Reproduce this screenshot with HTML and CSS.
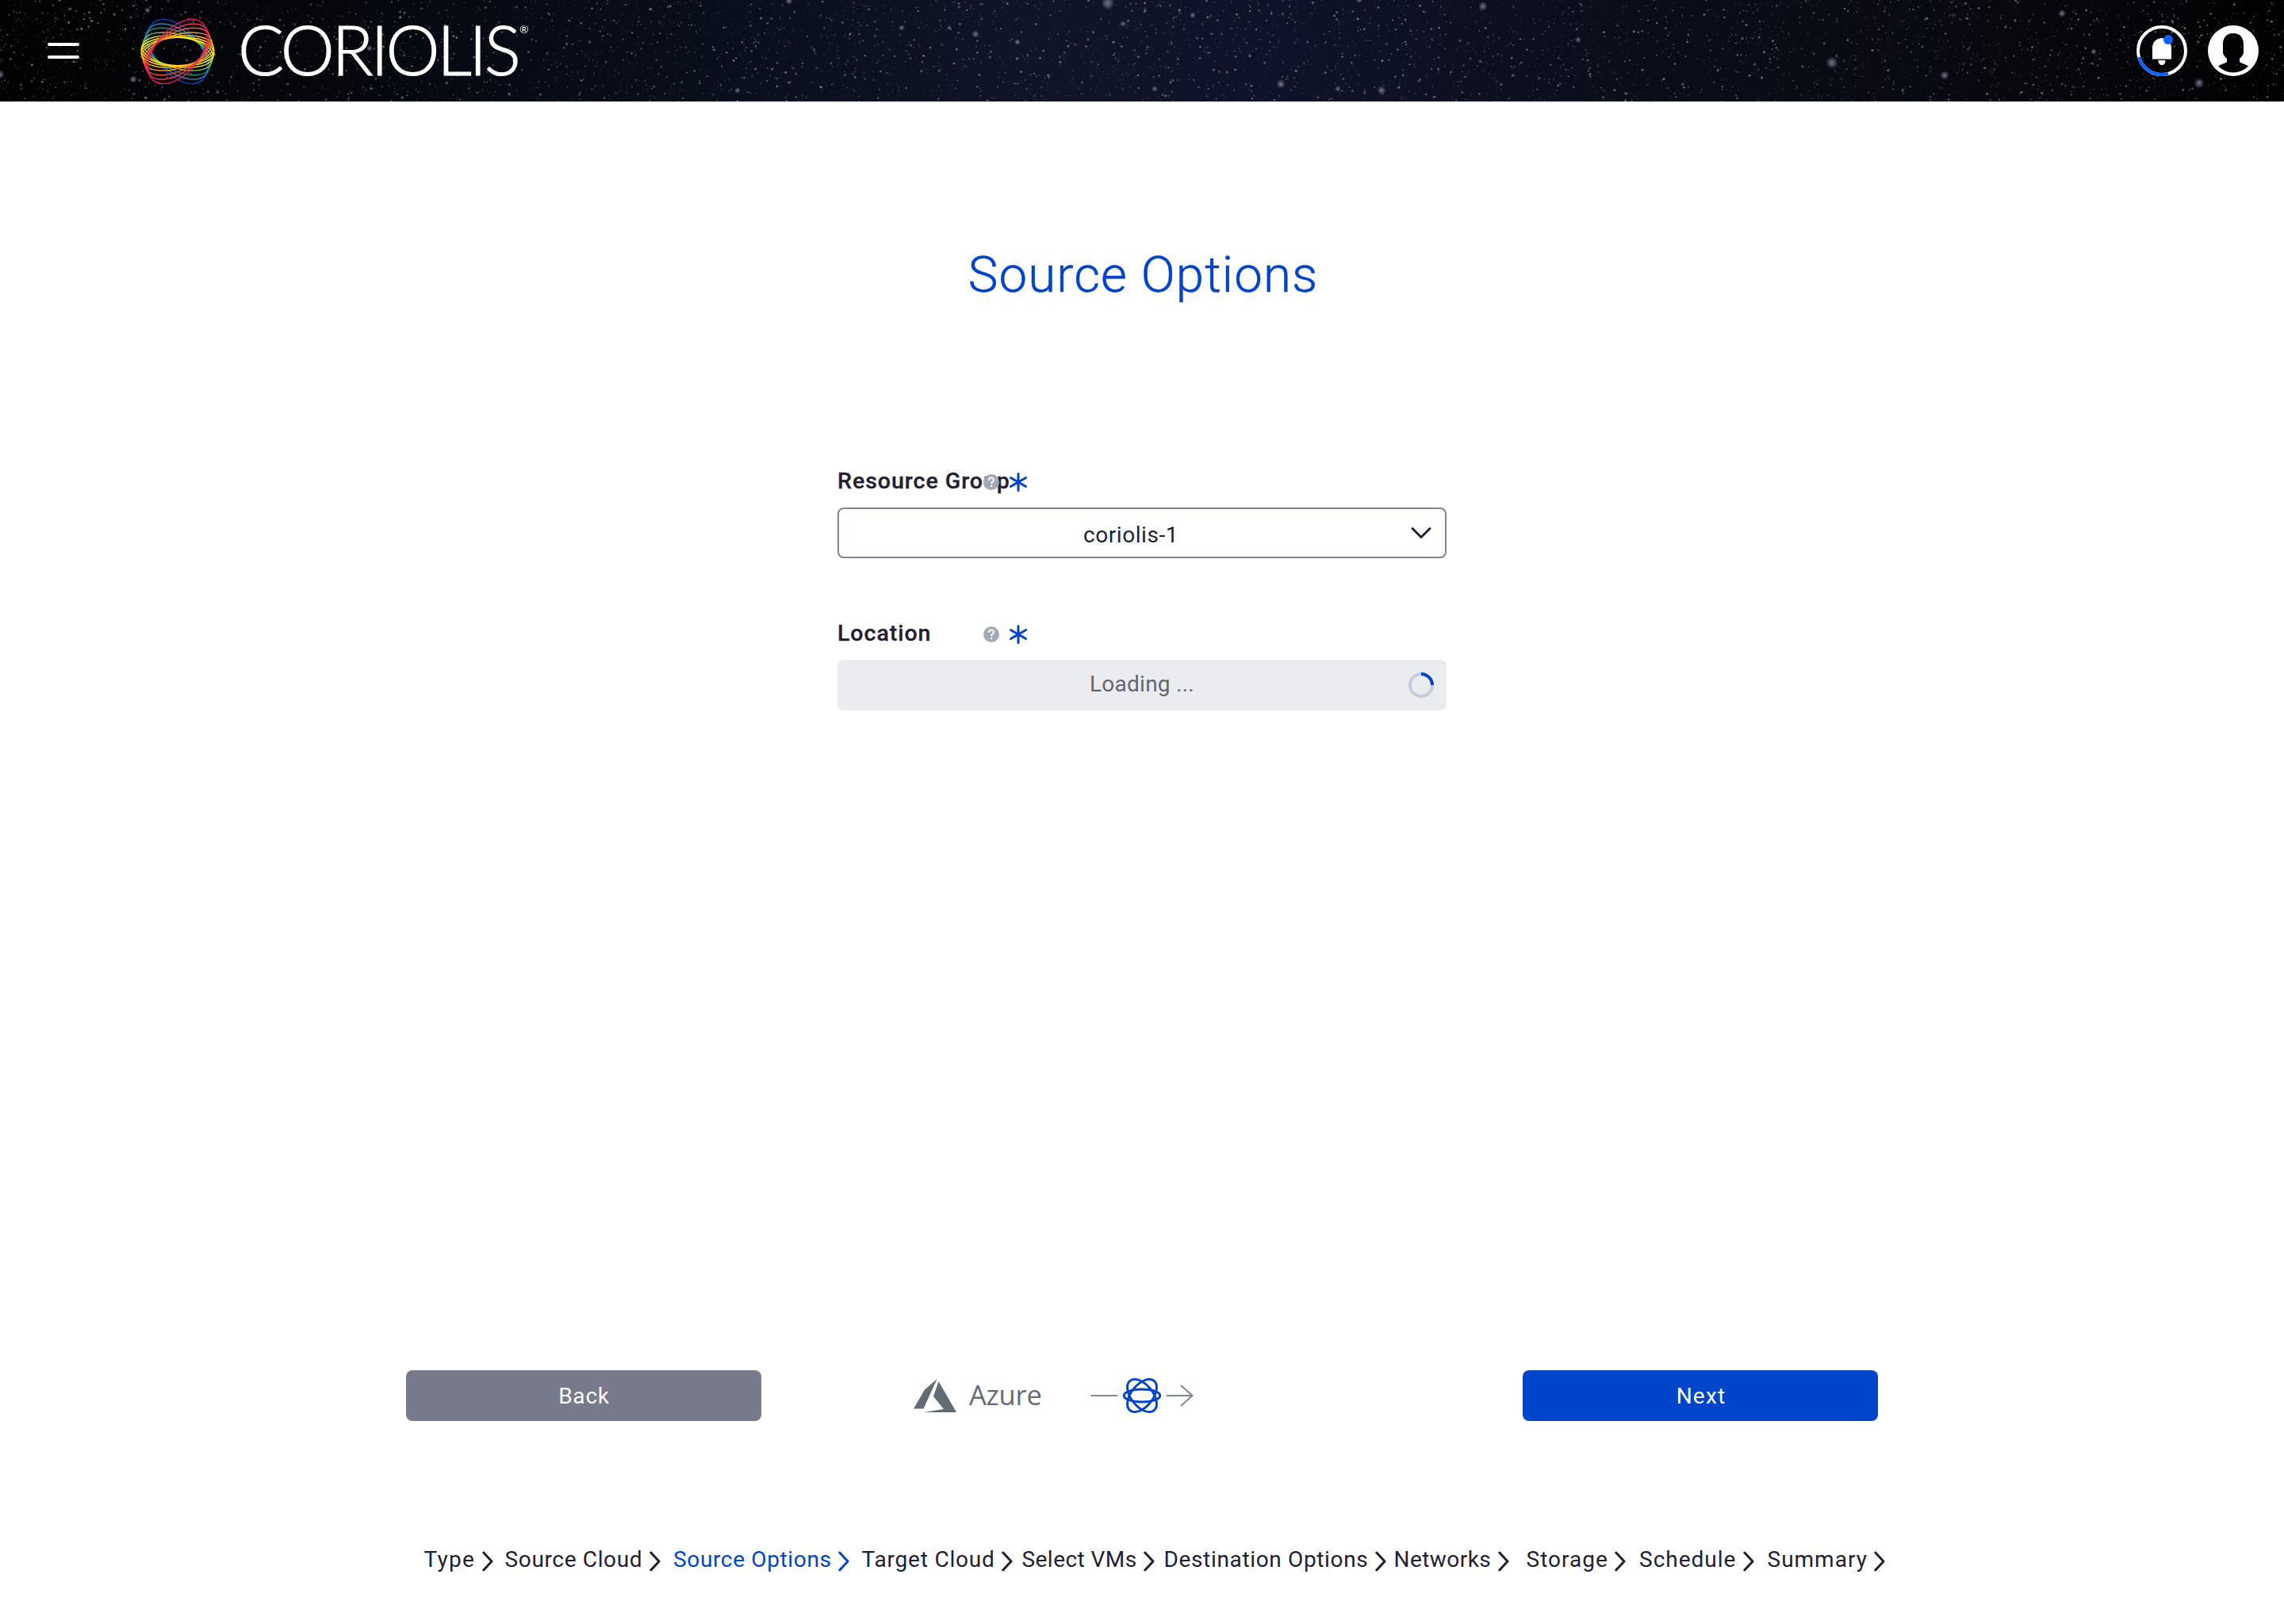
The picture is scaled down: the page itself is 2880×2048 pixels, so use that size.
FILE: index.html
```html
<!DOCTYPE html>
<html lang="en">
<head>
<meta charset="utf-8">
<title>Coriolis</title>
<link rel="stylesheet" href="styles.css">
</head>
<body>
<header class="header">
  <canvas class="sky" width="2880" height="128"></canvas>
  <button class="burger" aria-label="Menu"><i></i><i></i></button>
  <svg class="rings" width="96" height="88" viewBox="-48 -44 96 88" fill="none" stroke-width="1.4">
    <ellipse rx="47.5" ry="27.8" transform="rotate(50)" stroke="#0044ca"/>
    <ellipse rx="46" ry="25.9" transform="rotate(38.3)" stroke="#2f7db5"/>
    <ellipse rx="45.3" ry="23.5" transform="rotate(28)" stroke="#169080"/>
    <ellipse rx="45.1" ry="20.8" transform="rotate(17.4)" stroke="#8bc34a"/>
    <ellipse rx="45.4" ry="19" transform="rotate(8.9)" stroke="#d4dc3a"/>
    <ellipse rx="46" ry="17.8" transform="rotate(3)" stroke="#ffeb10"/>
    <ellipse rx="46" ry="17.8" transform="rotate(-3)" stroke="#ffd810"/>
    <ellipse rx="45.4" ry="19" transform="rotate(-8.9)" stroke="#ffbb20"/>
    <ellipse rx="45.1" ry="20.8" transform="rotate(-17.4)" stroke="#ff9425"/>
    <ellipse rx="45.3" ry="23.5" transform="rotate(-28)" stroke="#ff5a30"/>
    <ellipse rx="46" ry="25.9" transform="rotate(-38.3)" stroke="#ff2d4d"/>
    <ellipse rx="47.5" ry="27.8" transform="rotate(-50)" stroke="#f5135d"/>
  </svg>
  <span class="brand">CORIOLIS</span><span class="reg">®</span>
  <div class="actions">
    <svg width="64" height="64" viewBox="-32 -32 64 64" fill="none">
      <circle r="30" stroke="#fff" stroke-width="4"/>
      <path d="M-28.9 8A30 30 0 0 0 8 28.9" stroke="#1060ff" stroke-width="4"/>
      <path d="M-12 11V-4a12 12 0 0 1 24 0V11Z" fill="#fff"/>
      <path d="M-12 10.5H12" stroke="#999"/>
      <path d="M-4.5 12H4.5C4.5 20 -4.5 20 -4.5 12Z" fill="#fff"/>
      <circle cx="8" cy="-14" r="6" fill="#1060ff"/>
    </svg>
    <svg width="64" height="64" viewBox="-32 -32 64 64">
      <path fill="#fff" fill-rule="evenodd" d="M0-32A32 32 0 1 1 0 32A32 32 0 1 1 0-32ZM0-22C-9-22-13-16-13-8V2C-13 5-11 7-8 10V14C-10 16-16 17-19 19.5C-8 30 8 30 19 19.5C16 17 10 16 8 14V10C11 7 13 5 13 2V-8C13-16 9-22 0-22Z"/>
    </svg>
  </div>
</header>
<main class="page">
  <h1 class="title">Source Options</h1>
  <form class="form">
    <div class="field">
      <div class="label">
        <span>Resource Group</span>
        <span class="marks">
          <svg width="20" height="20" viewBox="0 0 20 20"><circle cx="10" cy="10" r="10" fill="#a4aab5"/><path d="M7 7.7C7 3.3 13 3.6 13 7.3C13 9.7 10 9.6 10 12.2M10 14V16" fill="none" stroke="#fff" stroke-width="2"/></svg>
          <svg width="24" height="24" viewBox="-12 -12 24 24" stroke="#0044ca" stroke-width="3" stroke-linecap="round"><path d="M0-10.5V10.5M-9.5-5.5L9.5 5.5M-9.5 5.5L9.5-5.5"/></svg>
        </span>
      </div>
      <div class="select chosen"><span>coriolis-1</span>
        <svg class="end" width="28" height="28" viewBox="-14 -14 28 28" fill="none" stroke="#1f2033" stroke-width="3" stroke-linecap="round" stroke-linejoin="round"><path d="M-11-5.5L0 5.5L11-5.5"/></svg>
      </div>
    </div>
    <div class="field">
      <div class="label">
        <span>Location</span>
        <span class="marks">
          <svg width="20" height="20" viewBox="0 0 20 20"><circle cx="10" cy="10" r="10" fill="#a4aab5"/><path d="M7 7.7C7 3.3 13 3.6 13 7.3C13 9.7 10 9.6 10 12.2M10 14V16" fill="none" stroke="#fff" stroke-width="2"/></svg>
          <svg width="24" height="24" viewBox="-12 -12 24 24" stroke="#0044ca" stroke-width="3" stroke-linecap="round"><path d="M0-10.5V10.5M-9.5-5.5L9.5 5.5M-9.5 5.5L9.5-5.5"/></svg>
        </span>
      </div>
      <div class="select loading"><span>Loading ...</span>
        <svg class="end" width="32" height="32" viewBox="-16 -16 32 32" fill="none" stroke-width="4"><circle r="14" stroke="#c8ccd7"/><path d="M0-14A14 14 0 0 1 14 0" stroke="#0044ca"/></svg>
      </div>
    </div>
  </form>
  <div class="nav">
    <button class="btn back">Back</button>
    <div class="flow">
      <svg width="54" height="42" viewBox="0 0 54 42" fill="#636c75"><path d="M29.5 0L14 13.5L0 37.5H12.5ZM31.5 3L25 22L38 38L13 42H54Z"/></svg>
      <span class="azure">Azure</span>
      <svg class="arrow" width="132" height="48" viewBox="-66 -24 132 48" fill="none" stroke="#7f8795" stroke-width="2">
        <path d="M-64.5 0H-31M31 0H63M49-13L63.5 0L49 13"/>
        <g stroke="#0044ca" stroke-width="2.9"><ellipse rx="22.8" ry="8"/><ellipse rx="24" ry="13.6" transform="rotate(51)"/><ellipse rx="24" ry="13.6" transform="rotate(-51)"/></g>
      </svg>
    </div>
    <button class="btn next">Next</button>
  </div>
  <svg class="defs" width="0" height="0"><symbol id="chevron" viewBox="0 0 14 26"><path d="M1.8 2L12 13L1.8 24" fill="none" stroke="currentColor" stroke-width="3" stroke-linecap="round" stroke-linejoin="round"/></symbol></svg>
  <ol class="steps">
    <li class="s13">Type<svg><use href="#chevron"/></svg></li>
    <li class="s7">Source Cloud<svg><use href="#chevron"/></svg></li>
    <li class="s7 active">Source Options<svg><use href="#chevron"/></svg></li>
    <li class="s8">Target Cloud<svg><use href="#chevron"/></svg></li>
    <li class="s5">Select VMs<svg><use href="#chevron"/></svg></li>
    <li class="s7">Destination Options<svg><use href="#chevron"/></svg></li>
    <li class="s5">Networks<svg><use href="#chevron"/></svg></li>
    <li class="s10">Storage<svg><use href="#chevron"/></svg></li>
    <li class="s10">Schedule<svg><use href="#chevron"/></svg></li>
    <li class="s10">Summary<svg><use href="#chevron"/></svg></li>
  </ol>
</main>
<script src="sky.js"></script>
</body>
</html>
```
FILE: styles.css
```css
* { box-sizing: border-box; }
body { margin: 0; font-family: Roboto, sans-serif; font-size: 28px; color: #1f2033; background: #fff; }
button { border: 0; padding: 0; background: none; font: inherit; color: inherit; }

.header { position: relative; display: flex; align-items: center; width: 2880px; height: 128px; padding: 0 32px 0 60px; background: #04050a; overflow: hidden; }
.header > * { position: relative; flex: none; }
.header > .sky { position: absolute; left: 0; top: 0; }
.burger { display: flex; flex-direction: column; gap: 12px; width: 40px; }
.burger i { height: 4px; border-radius: 2px; background: #fff; }
.rings { margin: 2px 0 0 76px; }
.brand { margin: -4px 0 0 28px; width: 355px; font: 300 86px/124px Lato, sans-serif; letter-spacing: -3.3px; -webkit-text-stroke: 1.2px #fff; color: #fff; white-space: nowrap; }
.reg { font: 14px/20px Lato, sans-serif; color: #fff; margin-top: -54px; }
.actions { display: flex; gap: 26px; margin-left: auto; }

.page { display: flex; flex-direction: column; align-items: center; width: 2880px; height: 1920px; }
.title { margin: 179px 0 0; height: 83px; padding-left: 3px; font-size: 63.5px; font-weight: 300; line-height: 80px; letter-spacing: 1.15px; color: #0044ca; -webkit-text-stroke: 0.5px #0044ca; }

.form { display: flex; flex-direction: column; gap: 74px; width: 768px; height: 1142px; margin-top: 196px; }
.field { display: flex; flex-direction: column; gap: 6px; }
.label { position: relative; height: 48px; font-size: 28.5px; line-height: 42px; font-weight: 500; letter-spacing: 0.98px; -webkit-text-stroke: 0.3px #1f2033; }
.marks { position: absolute; left: 184px; top: 6px; height: 32px; display: flex; align-items: center; gap: 12px; }
.select { position: relative; display: flex; justify-content: center; height: 64px; border: 2px solid #7f8795; border-radius: 8px; line-height: 64px; }
.chosen { padding: 1px 28px 0 0; letter-spacing: 0.55px; }
.chosen .end { right: 16px; }
.loading { border: 0; background: #ebecf0; color: #616770; line-height: 61px; letter-spacing: 0.25px; }
.end { position: absolute; right: 16px; top: 50%; transform: translateY(-50%); }

.nav { display: flex; justify-content: space-between; width: 1856px; height: 64px; }
.btn { width: 448px; height: 64px; padding-left: 1px; border-radius: 8px; color: #fff; letter-spacing: 0.8px; }
.back { background: #777a8b; }
.next { padding-left: 2px; background: #0044ca; letter-spacing: 1.2px; }
.flow { display: flex; align-items: center; width: 576px; }
.azure { width: 92px; margin-left: 16px; padding-bottom: 3px; font: 34.5px/61px "Open Sans", sans-serif; letter-spacing: -0.2px; color: #636c75; }
.arrow { margin-left: 60px; }

.defs { position: absolute; }
.steps { display: grid; grid-template-columns: 102px 212.5px 237.5px 202px 179px 290px 167px 142.5px 161.5px 151px; width: 1845px; list-style: none; padding: 0; margin: 139px 0 0 34px; line-height: 72px; }
.steps li { display: flex; align-items: center; white-space: nowrap; }
.steps svg { width: 14px; height: 26px; margin: 3px 0 0 8.5px; }
.active { color: #0044ca; }
.s5 { letter-spacing: 0.45px; }
.s7 { letter-spacing: 0.65px; }
.s8 { letter-spacing: 0.8px; }
.s10 { letter-spacing: 1px; }
.s13 { letter-spacing: 1.3px; }
```
FILE: sky.js
```js
// Paints the night sky behind the header.
(function () {
  var canvas = document.querySelector('.sky');
  var ctx = canvas.getContext('2d');
  var seed = 7;
  function rnd() {
    seed = (seed * 16807) % 2147483647;
    return seed / 2147483647;
  }

  var bg = ctx.createLinearGradient(0, 0, 2880, 0);
  bg.addColorStop(0, '#020203');
  bg.addColorStop(0.12, '#05060b');
  bg.addColorStop(0.3, '#090e1b');
  bg.addColorStop(0.45, '#0f1427');
  bg.addColorStop(0.55, '#0e132a');
  bg.addColorStop(0.7, '#0b0e1b');
  bg.addColorStop(0.88, '#08090f');
  bg.addColorStop(1, '#010102');
  ctx.fillStyle = bg;
  ctx.fillRect(0, 0, 2880, 128);

  for (var i = 0; i < 5200; i++) {
    var r = 0.5 + Math.pow(rnd(), 3) * 1.1;
    ctx.fillStyle = 'rgba(150,150,162,' + (0.15 + rnd() * 0.55) + ')';
    ctx.beginPath();
    ctx.arc(rnd() * 2880, rnd() * 128, r, 0, 7);
    ctx.fill();
  }

  // x, y, radius of the large glowing stars
  [[1397, 4, 9], [1504, 19, 4], [1416, 30, 4], [1456, 112, 4], [1615, 106, 6],
   [1687, 112, 4], [1742, 114, 6], [1714, 0, 4], [1870, 8, 6], [2310, 79, 8],
   [2452, 95, 6], [2773, 105, 7], [186, 13, 4], [168, 100, 5], [0, 94, 6],
   [1230, 43, 5], [1197, 35, 3], [1137, 35, 4], [2600, 17, 5], [995, 1, 5],
   [1283, 53, 4], [930, 114, 4], [466, 61, 4], [2640, 65, 4], [1990, 50, 4]
  ].forEach(function (s) {
    var g = ctx.createRadialGradient(s[0], s[1], 0, s[0], s[1], s[2]);
    g.addColorStop(0, 'rgba(140,140,158,.8)');
    g.addColorStop(0.5, 'rgba(120,120,140,.5)');
    g.addColorStop(1, 'rgba(80,85,120,0)');
    ctx.fillStyle = g;
    ctx.fillRect(s[0] - s[2], s[1] - s[2], s[2] * 2, s[2] * 2);
  });
})();
```
